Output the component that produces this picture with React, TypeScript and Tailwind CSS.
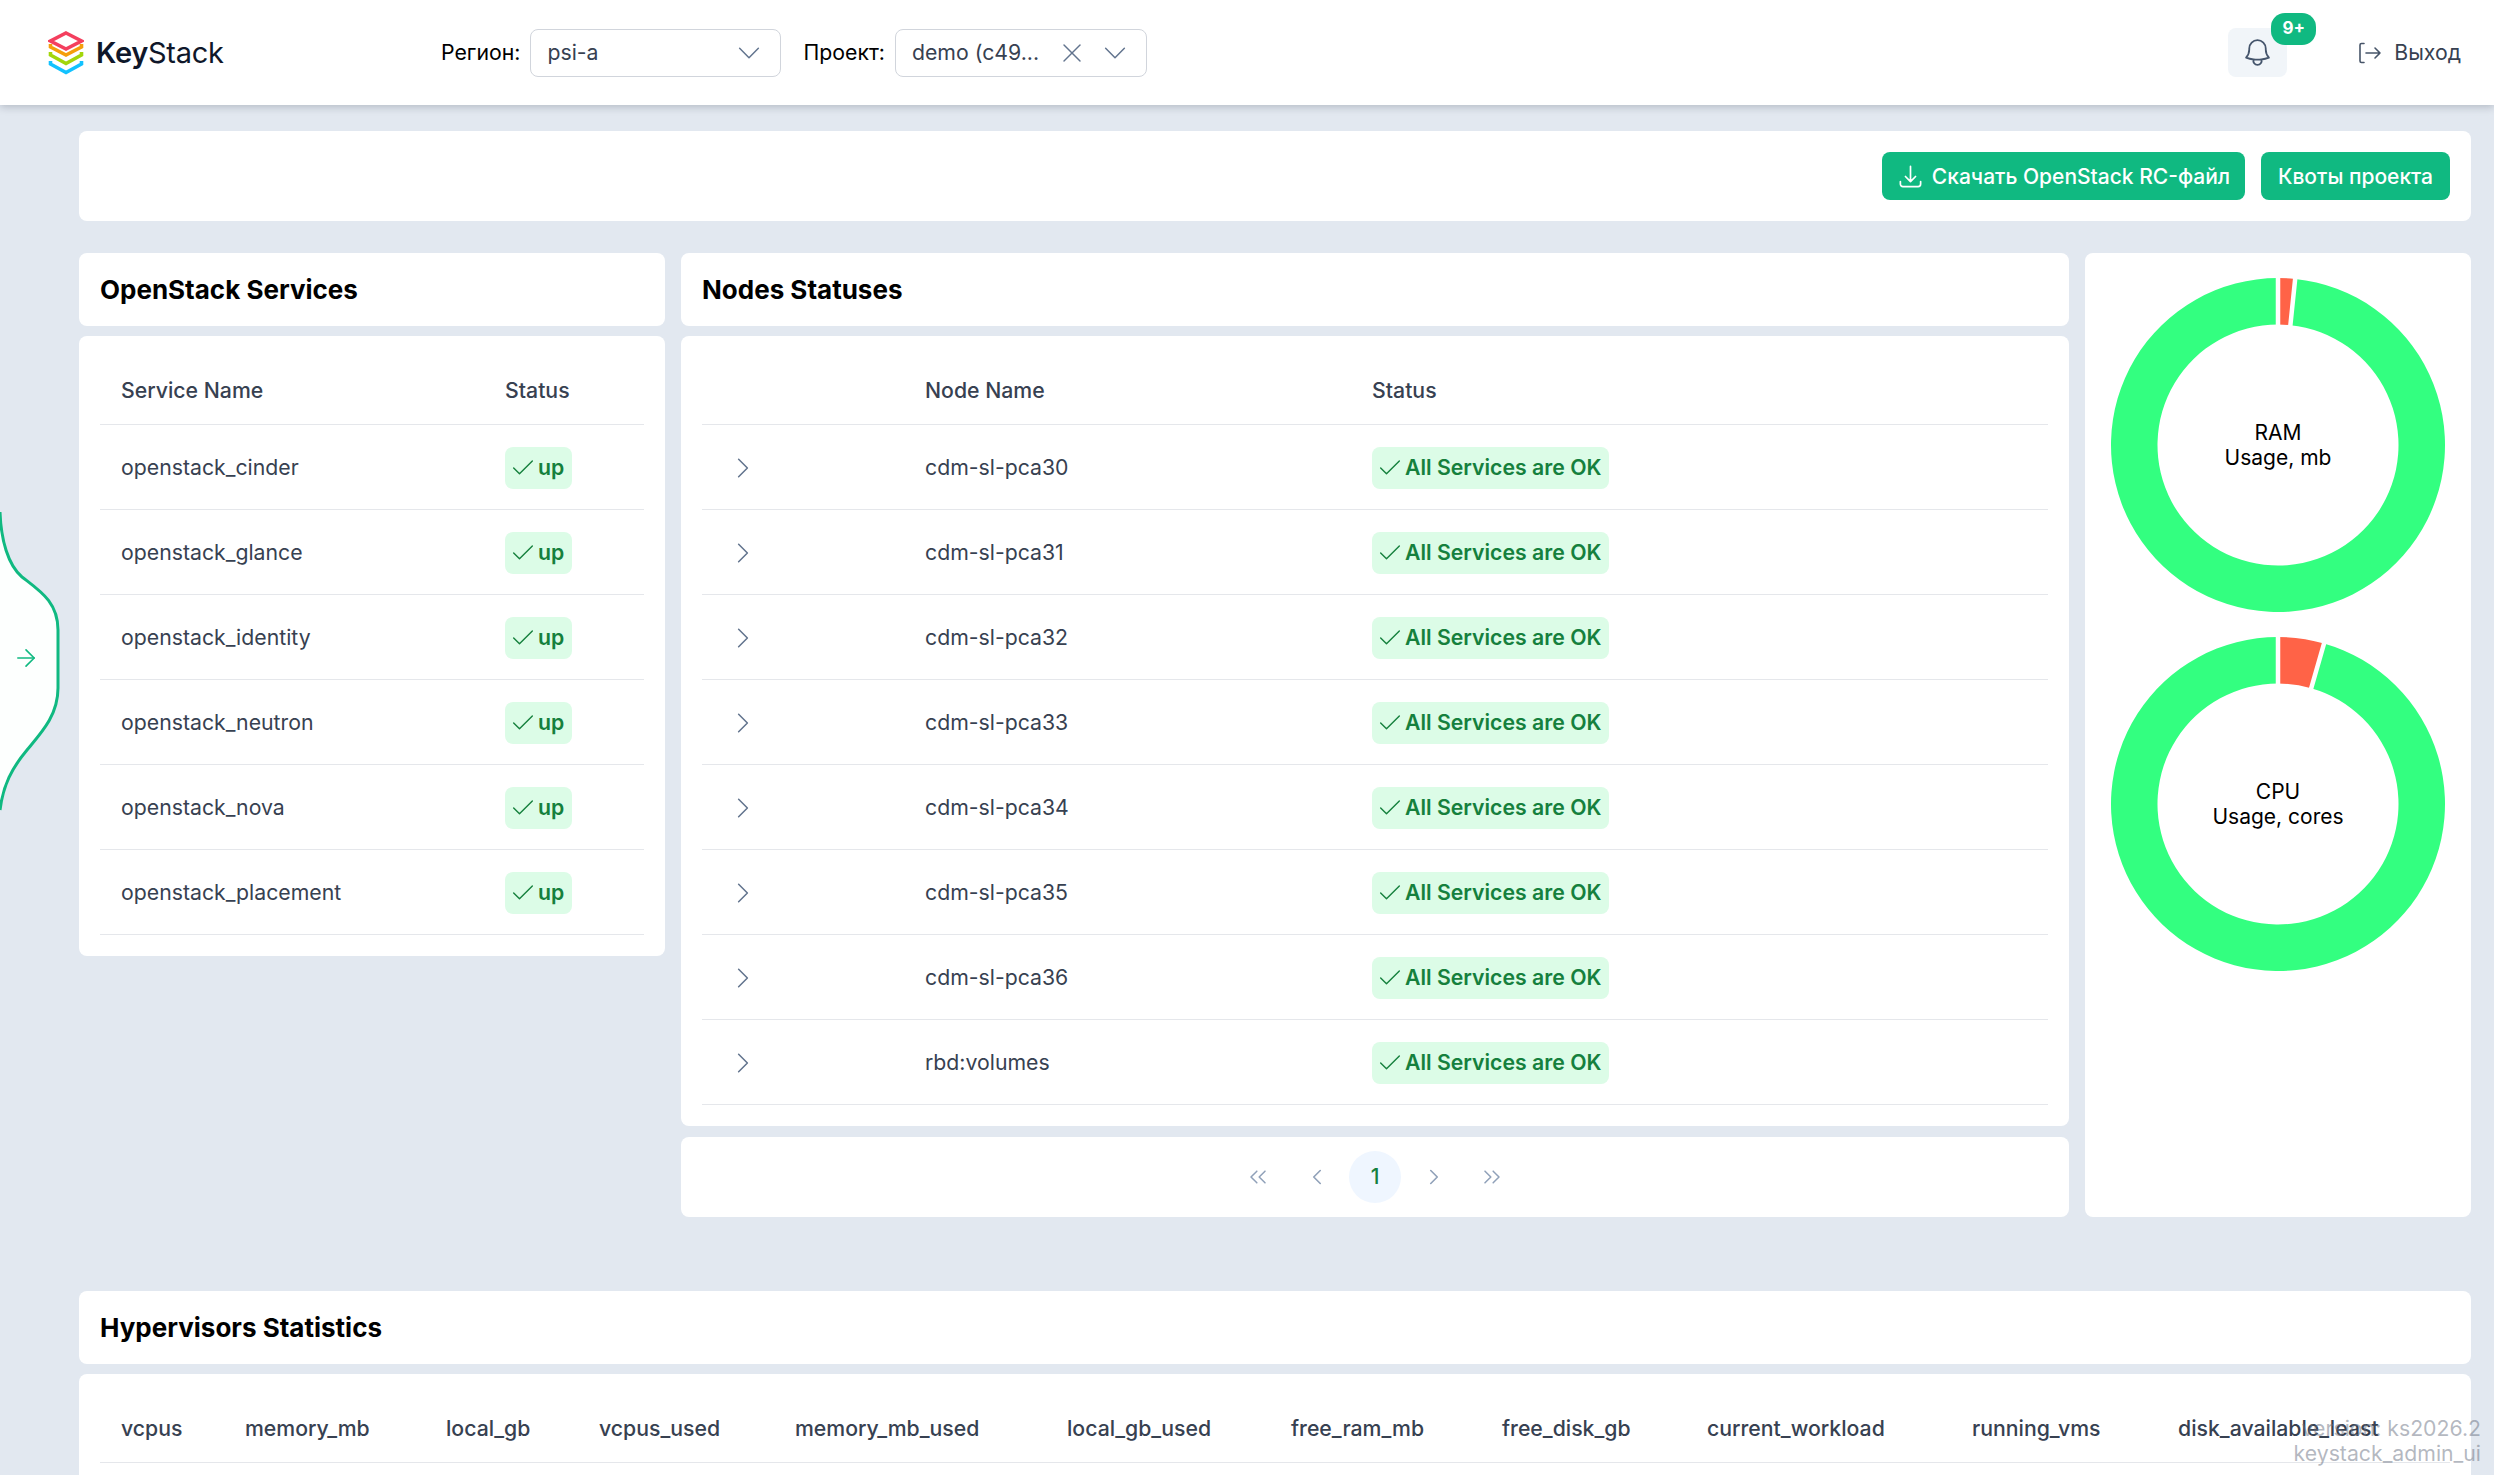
import { Check, ChevronLeft, ChevronRight, ChevronsLeft, ChevronsRight, X, ArrowRight } from 'lucide-react'
import { HiOutlineArrowDownTray, HiOutlineBell, HiOutlineChevronDown, HiOutlineChevronRight } from 'react-icons/hi2'

const services = [
  'openstack_cinder',
  'openstack_glance',
  'openstack_identity',
  'openstack_neutron',
  'openstack_nova',
  'openstack_placement',
]

const nodes = [
  'cdm-sl-pca30',
  'cdm-sl-pca31',
  'cdm-sl-pca32',
  'cdm-sl-pca33',
  'cdm-sl-pca34',
  'cdm-sl-pca35',
  'cdm-sl-pca36',
  'rbd:volumes',
]

const hypervisorColumns: [string, string][] = [
  ['vcpus', 'w-[124px]'],
  ['memory_mb', 'w-[201px]'],
  ['local_gb', 'w-[153px]'],
  ['vcpus_used', 'w-[196px]'],
  ['memory_mb_used', 'w-[272px]'],
  ['local_gb_used', 'w-[224px]'],
  ['free_ram_mb', 'w-[211px]'],
  ['free_disk_gb', 'w-[205px]'],
  ['current_workload', 'w-[265px]'],
  ['running_vms', 'w-[206px]'],
  ['disk_available_least', 'w-[293px]'],
]

function point(r: number, deg: number) {
  const a = ((deg - 90) * Math.PI) / 180
  return `${167 + r * Math.cos(a)} ${167 + r * Math.sin(a)}`
}

function arc(from: number, to: number) {
  const large = to - from > 180 ? 1 : 0
  return [
    `M${point(167, from)}`,
    `A167 167 0 ${large} 1 ${point(167, to)}`,
    `L${point(120.5, to)}`,
    `A120.5 120.5 0 ${large} 0 ${point(120.5, from)}`,
    'Z',
  ].join(' ')
}

function Donut({ used, title, sub }: { used: number; title: string; sub: string }) {
  return (
    <div className="relative w-[334px] h-[334px]">
      <svg width="334" height="334" viewBox="0 0 334 334">
        <path d={arc(used, 360)} fill="#33ff80" />
        <path d={arc(0, used)} fill="#ff6347" />
        <path d={`M${point(118, 0)} L${point(169, 0)} M${point(118, used)} L${point(169, used)}`} stroke="#fff" strokeWidth="4.5" />
      </svg>
      <div className="absolute inset-0 flex flex-col items-center justify-center text-[21px] leading-[25px] text-black">
        <span>{title}</span>
        <span>{sub}</span>
      </div>
    </div>
  )
}

function Logo() {
  return (
    <div className="flex items-center gap-[12px]">
      <svg width="36" height="44" viewBox="0 0 36 44" fill="none" strokeWidth="3.6">
        <path d="M18 2 L33.5 10 L18 18 L2.5 10 Z" stroke="#f43f5e" />
        <path d="M2.5 13 V16 L18 24 L33.5 16 V13" stroke="#f59e0b" />
        <path d="M2.5 21 V24 L18 32.5 L33.5 24 V21" stroke="#a3d60a" />
        <path d="M2.5 30 V33 L18 41.5 L33.5 33 V30" stroke="#12c2ff" />
      </svg>
      <span className="text-[29px] leading-none text-[#0f172a] tracking-[-0.3px]">
        <span className="font-semibold">Key</span>
        <span className="font-normal">Stack</span>
      </span>
    </div>
  )
}

function Header() {
  return (
    <header className="relative z-10 h-[105px] shrink-0 bg-white shadow-[0_2px_8px_rgba(15,23,42,0.22)] flex items-center pl-[48px] pr-[33px] text-[21.25px]">
      <div className="w-[393px]">
        <Logo />
      </div>
      <span className="text-black mr-[10px]">Регион:</span>
      <div className="w-[251px] h-[48px] border border-gray-300 rounded-lg flex items-center justify-between pl-[16px] pr-[16px] text-[#374151]">
        <span>psi-a</span>
        <HiOutlineChevronDown size={30} strokeWidth={1.2} className="text-slate-500" />
      </div>
      <span className="text-black ml-[22px] mr-[10px]">Проект:</span>
      <div className="w-[252px] h-[48px] border border-gray-300 rounded-lg flex items-center pl-[16px] pr-[16px] text-[#374151]">
        <span className="flex-1">demo (c49...</span>
        <X size={32} strokeWidth={1.1} className="text-slate-500 mr-[12px]" />
        <HiOutlineChevronDown size={30} strokeWidth={1.2} className="text-slate-500" />
      </div>
      <div className="ml-auto flex items-center">
        <div className="relative w-[59px] h-[49px] rounded-lg bg-slate-100 flex items-center justify-center">
          <HiOutlineBell size={33} strokeWidth={1.3} className="text-slate-600" />
          <span className="absolute left-[43px] top-[-15px] w-[45px] h-[32px] rounded-[14px] bg-[#10b981] text-white text-[17px] font-bold flex items-center justify-center">
            9+
          </span>
        </div>
        <div className="ml-[71px] flex items-center gap-[12px] text-[#374151]">
          <svg width="24" height="24" viewBox="0 0 24 24" fill="none" stroke="#475569" strokeWidth="1.6" strokeLinecap="round" strokeLinejoin="round">
            <path d="M6 2.5H3.5a1.5 1.5 0 0 0-1.5 1.5v16a1.5 1.5 0 0 0 1.5 1.5H6" />
            <path d="M8 12h14M17 7l5 5-5 5" />
          </svg>
          <span>Выход</span>
        </div>
      </div>
    </header>
  )
}

function StatusBadge({ label, compact }: { label: string; compact?: boolean }) {
  return (
    <span className={`inline-flex items-center h-[42px] rounded-lg bg-[#dcfce7] text-[#15803d] font-semibold pl-[4px] gap-[1px] ${compact ? 'w-[67px]' : 'w-[237px]'}`}>
      <Check size={28} strokeWidth={1.2} className="text-[#15803d]" />
      {label}
    </span>
  )
}

function TitleCard({ title }: { title: string }) {
  return (
    <div className="h-[73px] rounded-lg bg-white px-[21px] flex items-center text-[26px] font-bold text-black">
      {title}
    </div>
  )
}

function ServicesPanel() {
  return (
    <div className="flex flex-col gap-[10px]">
      <TitleCard title="OpenStack Services" />
      <div className="rounded-lg bg-white p-[21px] text-[21.25px] text-[#374151]">
        <div className="h-[68px] border-b border-gray-200 flex items-center font-medium pl-[21px]">
          <span className="w-[384px]">Service Name</span>
          <span>Status</span>
        </div>
        {services.map((name) => (
          <div key={name} className="h-[85px] pt-[2px] border-b border-gray-200 flex items-center pl-[21px]">
            <span className="w-[384px]">{name}</span>
            <StatusBadge label="up" compact />
          </div>
        ))}
      </div>
    </div>
  )
}

function NodesPanel() {
  return (
    <div className="flex flex-col gap-[10px]">
      <TitleCard title="Nodes Statuses" />
      <div className="rounded-lg bg-white p-[21px] text-[21.25px] text-[#374151]">
        <div className="h-[68px] border-b border-gray-200 flex items-center font-medium pl-[223px]">
          <span className="w-[447px]">Node Name</span>
          <span>Status</span>
        </div>
        {nodes.map((name) => (
          <div key={name} className="h-[85px] pt-[2px] border-b border-gray-200 flex items-center">
            <div className="w-[223px] pl-[27px]">
              <HiOutlineChevronRight size={28} strokeWidth={1.3} className="text-slate-500" />
            </div>
            <span className="w-[447px]">{name}</span>
            <StatusBadge label="All Services are OK" />
          </div>
        ))}
      </div>
      <div className="h-[80px] mt-[1px] rounded-lg bg-white flex items-center justify-center gap-[6.5px] text-slate-400">
        <span className="w-[52px] flex justify-center"><ChevronsLeft size={28} strokeWidth={1.3} /></span>
        <span className="w-[52px] flex justify-center"><ChevronLeft size={26} strokeWidth={1.5} /></span>
        <span className="w-[52px] h-[52px] rounded-full bg-[#eff6ff] flex items-center justify-center text-[21px] font-medium text-[#15803d]">1</span>
        <span className="w-[52px] flex justify-center"><ChevronRight size={26} strokeWidth={1.5} /></span>
        <span className="w-[52px] flex justify-center"><ChevronsRight size={28} strokeWidth={1.3} /></span>
      </div>
    </div>
  )
}

function ChartsPanel() {
  return (
    <div className="rounded-lg bg-white flex flex-col items-center pt-[25px] gap-[25px]">
      <Donut used={5.9} title="RAM" sub="Usage, mb" />
      <Donut used={16} title="CPU" sub="Usage, cores" />
    </div>
  )
}

function HypervisorsPanel() {
  return (
    <div className="mt-[74px] flex flex-col gap-[10px]">
      <TitleCard title="Hypervisors Statistics" />
      <div className="rounded-t-lg bg-white px-[21px] pt-[21px] h-[200px]">
        <div className="h-[68px] border-b border-gray-200 flex items-center text-[21.25px] font-medium text-[#374151]">
          {hypervisorColumns.map(([name, width]) => (
            <span key={name} className={`${width} pl-[21px] shrink-0`}>{name}</span>
          ))}
        </div>
      </div>
    </div>
  )
}

function SidebarToggle() {
  return (
    <div className="absolute left-0 top-[510px] z-20 w-[62px] h-[302px]">
      <svg width="62" height="302" viewBox="0 0 62 302">
        <path
          d="M0 2 C1 30 8 55 22 67 C40 81 58 92 58 120 L58 178 C58 205 42 222 27 240 C12 258 3 275 0 300"
          fill="#fdfffe"
          stroke="#10b981"
          strokeWidth="3"
        />
      </svg>
      <ArrowRight size={28} strokeWidth={1.4} className="absolute left-[12px] top-[134px] text-[#10b981]" />
    </div>
  )
}

export default function App() {
  return (
    <div className="relative h-[1475px] overflow-hidden bg-slate-200 flex flex-col font-['Inter',sans-serif]">
      <Header />
      <SidebarToggle />
      <main className="pl-[79px] pr-[23px] pt-[26px]">
        <div className="h-[90px] rounded-lg bg-white flex items-center justify-end gap-[16px] pr-[21px] text-[21px] font-medium text-white">
          <button className="h-[48px] w-[363px] pt-[1px] rounded-lg bg-[#10b981] flex items-center justify-center gap-[8px]">
            <HiOutlineArrowDownTray size={27} />
            Скачать OpenStack RC-файл
          </button>
          <button className="h-[48px] w-[189px] pt-[1px] rounded-lg bg-[#10b981]">Квоты проекта</button>
        </div>
        <div className="mt-[32px] grid grid-cols-[586px_1388px_386px] gap-x-[16px] h-[964px]">
          <ServicesPanel />
          <NodesPanel />
          <ChartsPanel />
        </div>
        <HypervisorsPanel />
      </main>
      <div className="absolute right-[13px] bottom-[9px] text-right text-[21.25px] leading-[25px] text-gray-500/50">
        <div>version: ks2026.2</div>
        <div>keystack_admin_ui</div>
      </div>
    </div>
  )
}
